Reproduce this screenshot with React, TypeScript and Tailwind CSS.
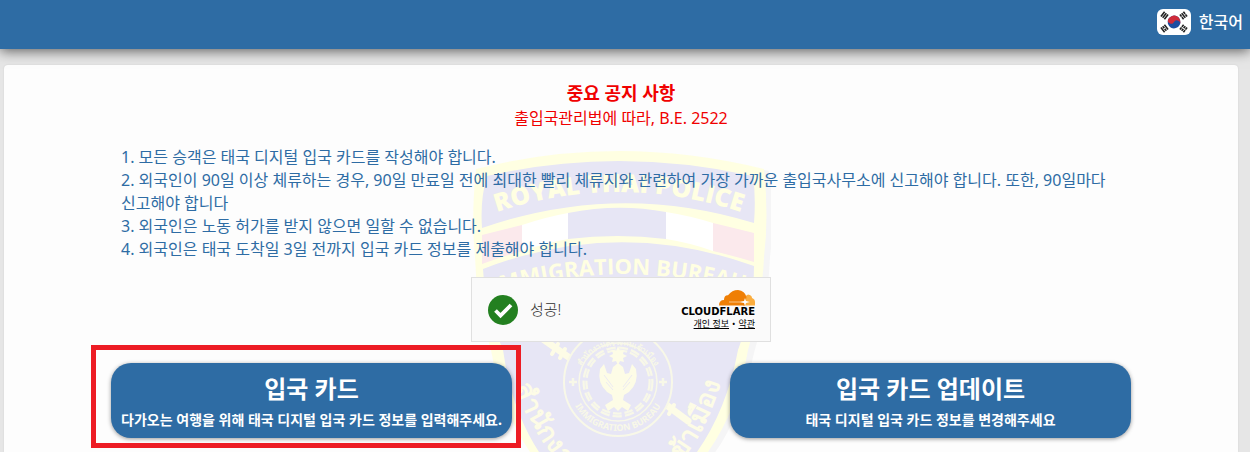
const NOTICES = [
  "모든 승객은 태국 디지털 입국 카드를 작성해야 합니다.",
  "외국인이 90일 이상 체류하는 경우, 90일 만료일 전에 최대한 빨리 체류지와 관련하여 가장 가까운 출입국사무소에 신고해야 합니다. 또한, 90일마다 신고해야 합니다",
  "외국인은 노동 허가를 받지 않으면 일할 수 없습니다.",
  "외국인은 태국 도착일 3일 전까지 입국 카드 정보를 제출해야 합니다.",
];

function Trigram({ x, y, angle, split }: { x: number; y: number; angle: number; split: string }) {
  return (
    <g transform={`translate(${x} ${y}) rotate(${angle})`} stroke="#222" strokeWidth="1.6">
      <path d="M-3-2.2h6M-3 0h6M-3 2.2h6" />
      <path d={split} stroke="#fff" strokeWidth="0.8" />
    </g>
  );
}

function KoreanFlag() {
  return (
    <svg viewBox="0 0 34 26" className="h-[26px] w-[34px]" aria-hidden="true">
      <rect width="34" height="26" rx="6" fill="#fff" />
      <g transform="translate(17 13) rotate(28)">
        <circle r="6.4" fill="#1c4da1" />
        <path d="M-6.4 0A6.4 6.4 0 0 1 6.4 0A3.2 3.2 0 0 0 0 0A3.2 3.2 0 0 1-6.4 0Z" fill="#cf2b3a" />
      </g>
      <Trigram x={7.5} y={6.5} angle={-52} split="" />
      <Trigram x={26.5} y={6.5} angle={52} split="M0-3v2M0 1v2" />
      <Trigram x={7.5} y={19.5} angle={52} split="M0-1v2" />
      <Trigram x={26.5} y={19.5} angle={-52} split="M0-3v6" />
    </svg>
  );
}

function CloudIcon() {
  return (
    <svg viewBox="0 0 36 16" className="h-4 w-9" aria-hidden="true">
      <path d="M24 15.5L26 8q.5-3 3-3.5Q33 5 33 8q3 1 3 4v3.5Z" fill="#faad3f" />
      <path d="M0 15.5Q0 10 5 10Q5 5 9 5.2Q13 0 19 0Q26 1 27.5 7L26 15.5Z" fill="#ef7f05" />
      <path d="M10 12h15" stroke="#fdd7a8" strokeWidth="0.8" />
      <path d="M26 8l1 3 4 1-4 1-1 3-1-3-4-1 4-1Z" fill="#fff" />
    </svg>
  );
}

function PoliceShield() {
  return (
    <svg
      viewBox="0 0 300 340"
      className="pointer-events-none absolute top-[82px] left-1/2 h-[340px] w-[300px] -translate-x-1/2"
      aria-hidden="true"
    >
      <defs>
        <path id="arc-top" d="M12 70Q148 20 284 70" />
        <path id="arc-mid" d="M5 153Q147 103 292 150" />
        <path id="seal-top" d="M104 241A43 43 0 1 1 190 241" />
        <path id="seal-bottom" d="M98 235A49 49 0 0 0 196 235" />
        <path id="thai-left" d="M44 240Q58 278 88 316Q115 350 190 380" />
        <path id="thai-right" d="M110 380Q180 350 210 316Q238 278 250 236" />
      </defs>
      <path d="M8 24Q152-8 298 24Q304 70 299 110Q297 160 283 206Q268 275 242 308Q225 335 150 350L30 110Z" fill="#f5f5f6" />
      <path
        d="M5 22Q147-14 293 22Q298 70 293 110Q291 158 277 203Q267 262 237 305Q215 338 147 350Q80 338 59 305Q30 262 20 203Q5 158 4 110Q0 70 5 22Z"
        fill="#ffffe2"
      />
      <g fill="#e7e6f5">
        <path d="M16 29Q147-1 282 29Q285 50 283 76Q147 34 11 81Q9 52 16 29Z" />
        <path d="M97 66Q147 56 195 65V92Q147 86 97 92Z" />
        <path d="M12 122Q147 70 283 119Q283 160 267 203Q256 262 226 305Q205 330 147 340Q90 330 68 305Q40 262 32 203Q14 160 12 122Z" />
      </g>
      <path d="M51 78Q75 70 97 66V92Q75 96 51 104ZM195 65Q220 69 242 76V104Q220 96 195 92Z" fill="#fff" />
      <path d="M11 88Q30 83 51 78V104Q30 110 11 117ZM242 76Q263 81 283 86V115Q263 109 242 104Z" fill="#fbe9ec" />
      <g fill="#ffffe2" fontFamily="Open Sans, Noto Sans, sans-serif" textAnchor="middle">
        <text fontSize="25" fontWeight="800">
          <textPath href="#arc-top" startOffset="50%">ROYAL THAI POLICE</textPath>
        </text>
        <text fontSize="22" fontWeight="700">
          <textPath href="#arc-mid" startOffset="50%">IMMIGRATION BUREAU</textPath>
        </text>
      </g>
      <g stroke="#fdfce6" strokeLinecap="round">
        <path d="M66 188L106 216M190 254L217 274" strokeWidth="7" />
        <path d="M58 181l6 5M87 197l-6 10M94 202l-5 9M203 258l-5 9" strokeWidth="4" />
      </g>
      <circle cx="147" cy="235" r="54" fill="#e7e6f5" stroke="#f8f8e8" strokeWidth="2" />
      <g fill="none" stroke="#f8f8e8">
        <circle cx="147" cy="235" r="39" strokeWidth="1.5" />
        <circle cx="147" cy="235" r="33" strokeWidth="5" strokeDasharray="9 3" strokeLinecap="butt" />
        <circle cx="147" cy="235" r="33" stroke="#e7e6f5" strokeWidth="0.6" />
      </g>
      <g fill="#f8f8e8" fontFamily="Noto Sans, sans-serif" fontWeight="700" textAnchor="middle">
        <text fontSize="8">
          <textPath href="#seal-top" startOffset="50%">สำนักงานตรวจคนเข้าเมือง</textPath>
        </text>
        <text fontSize="9">
          <textPath href="#seal-bottom" startOffset="50%">IMMIGRATION BUREAU</textPath>
        </text>
      </g>
      <path d="M102 231v8M98 235h8M192 231v8M188 235h8" stroke="#f8f8e8" strokeWidth="2.4" />
      {/* garuda: headdress, wings, body and legs */}
      <g fill="#fdfce6">
        <path d="M147 199l2 5 4-1-1 4 4 2-4 2 1 4-4-1-2 4-2-4-4 1 1-4-4-2 4-2-1-4 4 1Z" />
        <path d="M147 216l5 4 2 7 4-1 3-9 4 5q3 14-7 23l-5 3-1 5 8 5-3 6-6-4-4 4-4-4-6 4-3-6 8-5-1-5-5-3q-10-9-7-23l4-5 3 9 4 1 2-7Z" />
      </g>
      <path d="M133 228l9 12M161 228l-9 12M135 235l7 8M159 235l-7 8" stroke="#e7e6f5" strokeWidth="0.8" />
      <g fill="#fdfce6" fontFamily="Noto Sans, sans-serif" fontWeight="700" fontSize="26">
        <text>
          <textPath href="#thai-left">สำนักงานตรวจ</textPath>
        </text>
        <text textAnchor="end">
          <textPath href="#thai-right" startOffset="100%">คนเข้าเมือง</textPath>
        </text>
      </g>
    </svg>
  );
}

function CardButton({ title, caption, marked }: { title: string; caption: string; marked?: boolean }) {
  return (
    <div className="relative w-[401px]">
      <button
        type="button"
        className="flex h-[75px] w-full flex-col items-center justify-center rounded-[20px] bg-[#2e6ca4] font-bold text-white shadow-[0_1px_4px_rgba(0,0,0,0.4)]"
      >
        <span className="text-2xl leading-[38px]">{title}</span>
        <span className="text-sm leading-6 whitespace-nowrap">{caption}</span>
      </button>
      {marked && (
        <div className="pointer-events-none absolute -top-[18px] -right-[9px] -bottom-[10px] -left-5 border-5 border-[#ed1c24]" />
      )}
    </div>
  );
}

function Verification() {
  return (
    <div className="mx-auto mt-4 flex h-[65px] w-[300px] items-center border border-[#e0e0e0] bg-[#fafafa] pr-[15px] pl-4">
      <svg viewBox="0 0 30 30" className="size-[30px]" aria-hidden="true">
        <circle cx="15" cy="15" r="15" fill="#238020" />
        <path d="M7.5 15.5l5 5L23 10" fill="none" stroke="#fff" strokeWidth="3.8" />
      </svg>
      <span className="ml-3 text-[15px] font-light text-[#303030]">성공!</span>
      <div className="ml-auto flex flex-col items-end text-black">
        <CloudIcon />
        <span className="font-['DejaVu_Sans'] text-[10px] leading-3 font-bold">CLOUDFLARE</span>
        <div className="flex gap-[3px] text-[9px] leading-3">
          <a href="#privacy" className="underline">개인 정보</a>
          <span>•</span>
          <a href="#terms" className="underline">약관</a>
        </div>
      </div>
    </div>
  );
}

export default function App() {
  return (
    <div className="flex h-screen flex-col overflow-hidden bg-[#e6e6e6] font-['Noto_Sans','Noto_Sans_CJK_KR',sans-serif]">
      <header className="relative z-10 flex h-[49px] shrink-0 items-start justify-end bg-[#2e6ca4] px-[7px] pt-[9px] shadow-[0_2px_12px_rgba(0,0,0,0.6)]">
        <button type="button" className="flex items-center gap-2 font-medium text-white">
          <KoreanFlag />
          <span className="text-base">한국어</span>
        </button>
      </header>

      <main className="relative mt-4 mr-3 ml-1 flex-1 overflow-hidden rounded-t bg-[#fdfdfd] pt-[15px] shadow-[0_0_2px_rgba(0,0,0,0.1)]">
        <PoliceShield />
        <div className="relative mx-auto max-w-[1020px]">
          <div className="text-center text-[#f00000]">
            <h1 className="text-lg leading-[26px] font-bold">중요 공지 사항</h1>
            <p className="text-base leading-6">출입국관리법에 따라, B.E. 2522</p>
          </div>

          <ol className="mt-4 px-[10px] text-base leading-[23px] break-keep text-[#2e6ca4]">
            {NOTICES.map((notice, i) => (
              <li key={i}>{`${i + 1}. ${notice}`}</li>
            ))}
          </ol>

          <Verification />

          <div className="mt-[21px] flex justify-between">
            <CardButton title="입국 카드" caption="다가오는 여행을 위해 태국 디지털 입국 카드 정보를 입력해주세요." marked />
            <CardButton title="입국 카드 업데이트" caption="태국 디지털 입국 카드 정보를 변경해주세요" />
          </div>
        </div>
      </main>
    </div>
  );
}
